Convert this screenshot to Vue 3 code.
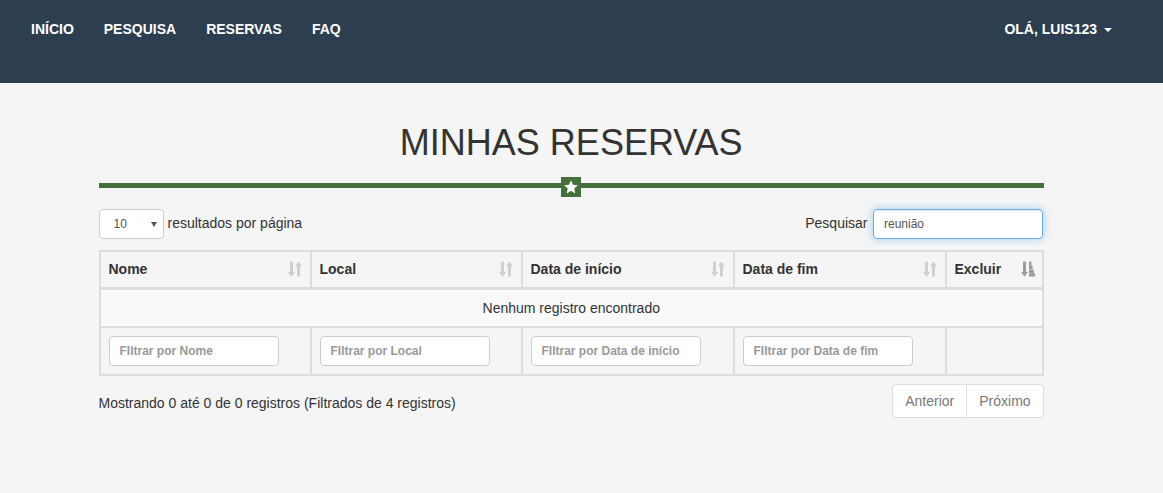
<script setup>
const columns = [
  { label: 'Nome', filter: 'FIltrar por Nome' },
  { label: 'Local', filter: 'FIltrar por Local' },
  { label: 'Data de início', filter: 'FIltrar por Data de início' },
  { label: 'Data de fim', filter: 'FIltrar por Data de fim' },
]
const links = ['INÍCIO', 'PESQUISA', 'RESERVAS', 'FAQ']
</script>

<template>
  <div class="page">
    <nav class="navbar">
      <ul class="nav">
        <li v-for="l in links" :key="l"><a>{{ l }}</a></li>
      </ul>
      <a class="user">OLÁ, LUIS123<span class="caret"></span></a>
    </nav>

    <main class="content">
      <h1>MINHAS RESERVAS</h1>
      <div class="divider">
        <span class="line left"></span>
        <span class="star-box">
          <svg width="14" height="14" viewBox="0 0 16 16"><polygon fill="#fff" points="8,0.3 10.3,5.4 15.8,6 11.7,9.7 12.9,15.3 8,12.4 3.1,15.3 4.3,9.7 0.2,6 5.7,5.4" /></svg>
        </span>
        <span class="line"></span>
      </div>

      <div class="toolbar">
        <label class="length">
          <span class="select-wrap">
            <select class="field select"><option>10</option><option>25</option></select>
          </span>
          <span class="lbl">resultados por página</span>
        </label>
        <label class="search">
          <span class="lbl">Pesquisar</span>
          <input class="field focus" value="reunião" />
        </label>
      </div>

      <table class="grid">
        <colgroup>
          <col class="c1" /><col class="c1" /><col class="c2" /><col class="c2" /><col />
        </colgroup>
        <thead>
          <tr>
            <th v-for="c in columns" :key="c.label">
              <div class="th">
                {{ c.label }}
                <svg class="sort" width="14" height="16" viewBox="0 0 14 16" fill="#cfcfcf">
                  <path d="M2 .6h3v10.4h2L3.5 15.8 0 11h2z" />
                  <path d="M9 15.6h3V5.2h2L10.5 .4 7 5.2h2z" />
                </svg>
              </div>
            </th>
            <th>
              <div class="th">
                Excluir
                <svg class="sort last" width="14" height="16" viewBox="0 0 14 16" fill="#9b9b9b">
                  <path d="M2 .6h3v10.4h2L3.5 15.8 0 11h2z" />
                  <path d="M8 .6h2.4v3.6H8zM8 4.5h3.6V8.1H8zM8 8.4h4.8V12H8zM8 12.3h6v3.3H8z" />
                </svg>
              </div>
            </th>
          </tr>
        </thead>
        <tbody>
          <tr class="empty"><td colspan="5">Nenhum registro encontrado</td></tr>
        </tbody>
        <tfoot>
          <tr>
            <td v-for="c in columns" :key="c.label" class="filter">
              <input class="field filter-input" :placeholder="c.filter" />
            </td>
            <td class="filter"></td>
          </tr>
        </tfoot>
      </table>

      <div class="footer">
        <div class="info">Mostrando 0 até 0 de 0 registros (Filtrados de 4 registros)</div>
        <div class="pager">
          <a class="prev">Anterior</a>
          <a class="next">Próximo</a>
        </div>
      </div>
    </main>
  </div>
</template>

<style>
html, body { margin: 0; background: #f5f5f5; }
</style>

<style scoped>
.page {
  min-height: 493px;
  background: #f5f5f5;
  color: #333;
  font: 14px/20px "Liberation Sans", Arial, sans-serif;
}
.navbar {
  height: 83px;
  box-sizing: border-box;
  background: #2c3e50;
  padding: 19px 36px 0 16px;
  display: flex;
  justify-content: space-between;
  align-items: flex-start;
  color: #fff;
  font-weight: 700;
}
.nav { display: flex; list-style: none; margin: 0; padding: 0; }
.nav a { display: block; padding: 0 15px; }
.user { padding: 0 15px; display: flex; align-items: center; }
.caret {
  margin-left: 7px;
  margin-top: 1px;
  border-top: 4px solid #fff;
  border-left: 4px solid transparent;
  border-right: 4px solid transparent;
}
.content { padding: 40px 119px 0 98.5px; }
h1 {
  margin: 0;
  font-size: 36px;
  line-height: 40px;
  font-weight: 400;
  text-align: center;
  color: #333;
}
.divider { display: flex; margin-top: 14px; height: 20px; }
.line { flex: 1; height: 5px; margin-top: 6px; background: #43703b; }
.line.left { flex: none; width: 462.5px; }
.star-box {
  width: 20px;
  height: 20px;
  background: #43703b;
  display: flex;
  align-items: center;
  justify-content: center;
}
.toolbar {
  display: flex;
  justify-content: space-between;
  margin-top: 12px;
  height: 30px;
}
.length, .search { display: flex; align-items: center; }
.length { gap: 4px; }
.search { gap: 5.5px; margin-right: 1px; }
.lbl { padding-bottom: 2px; }
.select-wrap { position: relative; display: block; height: 30px; }
.select-wrap::after {
  content: "";
  position: absolute;
  left: 52.5px;
  top: 12.5px;
  border-top: 5.5px solid #555;
  border-left: 3px solid transparent;
  border-right: 3px solid transparent;
  pointer-events: none;
}
.field {
  box-sizing: border-box;
  height: 30px;
  width: 170px;
  padding: 5px 10px;
  border: 1px solid #ccc;
  border-radius: 4px;
  background: #fff;
  color: #555;
  font: 12px/18px "Liberation Sans", Arial, sans-serif;
  outline: none;
}
.select { display: block; width: 65px; padding-left: 14px; appearance: none; }
.focus {
  border-color: #66afe9;
  box-shadow: inset 0 1px 1px rgba(0,0,0,.075), 0 0 8px rgba(102,175,233,.6);
}
.grid {
  width: 945.5px;
  margin-top: 11px;
  table-layout: fixed;
  border-collapse: separate;
  border-spacing: 0;
  border: 1px solid #ddd;
  box-sizing: border-box;
}
.c1 { width: 211px; }
.c2 { width: 212px; }
th, td {
  border: 1px solid #ddd;
  padding: 8px;
  box-sizing: border-box;
}
th {
  height: 38px;
  padding-top: 6px;
  padding-bottom: 8px;
  border-bottom-width: 2px;
  text-align: left;
  font-weight: 700;
}
.th { display: flex; justify-content: space-between; align-items: center; }
.sort { flex: none; }
.sort.last { margin-right: -1px; }
.empty td {
  height: 38px;
  text-align: center;
  background: #f9f9f9;
}
.filter { height: 48px; padding: 8px; }
.filter-input {
  display: block;
  font-weight: 700;
}
.filter-input::placeholder { color: #999; opacity: 1; }
.footer {
  display: flex;
  justify-content: space-between;
  align-items: center;
  margin-top: 8px;
}
.info { padding-top: 4px; }
.pager { display: flex; margin-right: .4px; }
.pager a {
  box-sizing: border-box;
  height: 34px;
  padding: 6px 12px;
  background: #fff;
  border: 1px solid #ddd;
  color: #777;
}
.pager .prev { border-radius: 4px 0 0 4px; }
.pager .next { margin-left: -1px; border-radius: 0 4px 4px 0; }
</style>
